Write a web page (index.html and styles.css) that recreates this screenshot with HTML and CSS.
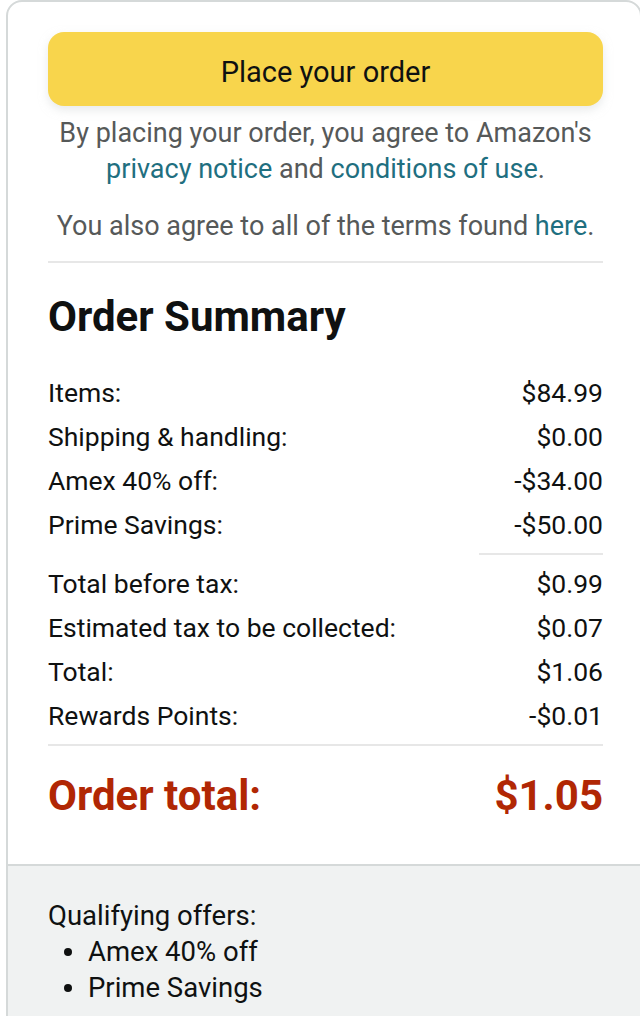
FILE: index.html
```html
<!DOCTYPE html>
<html lang="en">
<head>
<meta charset="utf-8">
<title>Order Summary</title>
<link rel="stylesheet" href="styles.css">
</head>
<body>
<div class="card">
  <div class="main">
    <button class="place-btn" type="button">Place your order</button>
    <p class="legal">By placing your order, you agree to Amazon's <a href="#">privacy notice</a> and <a href="#">conditions of use</a>.</p>
    <p class="legal legal-2">You also agree to all of the terms found <a href="#">here</a>.</p>
    <hr class="divider">
    <h2 class="title">Order Summary</h2>
    <div class="rows">
      <div class="row"><span>Items:</span><span>$84.99</span></div>
      <div class="row"><span>Shipping &amp; handling:</span><span>$0.00</span></div>
      <div class="row"><span>Amex 40% off:</span><span>-$34.00</span></div>
      <div class="row"><span>Prime Savings:</span><span>-$50.00</span></div>
      <hr class="subdivider">
      <div class="row"><span>Total before tax:</span><span>$0.99</span></div>
      <div class="row"><span>Estimated tax to be collected:</span><span>$0.07</span></div>
      <div class="row"><span>Total:</span><span>$1.06</span></div>
      <div class="row"><span>Rewards Points:</span><span>-$0.01</span></div>
    </div>
    <hr class="divider total-divider">
    <div class="order-total"><span>Order total:</span><span>$1.05</span></div>
  </div>
  <div class="footer">
    <div class="offers-title">Qualifying offers:</div>
    <ul class="offers">
      <li>Amex 40% off</li>
      <li>Prime Savings</li>
    </ul>
  </div>
</div>
</body>
</html>
```

FILE: styles.css
```css
html, body {
  margin: 0;
  padding: 0;
  overflow: hidden;
  background: #ffffff;
}

body {
  font-family: Roboto, "Liberation Sans", Arial, sans-serif;
  color: #0F1111;
  font-size: 26px;
}

.card {
  margin-left: 6px;
  width: 636px;
  border: 2px solid #D5D9D9;
  border-radius: 16px 16px 0 0;
  box-sizing: border-box;
  height: 1040px;
  display: flex;
  flex-direction: column;
}

.main {
  padding: 30px 37px 44px 40px;
}

.place-btn {
  display: block;
  width: 100%;
  height: 74px;
  border: none;
  border-radius: 16px;
  background: #F8D54C;
  box-shadow: 0 4px 10px 0 rgba(213, 217, 217, 0.55);
  font-family: Roboto, "Liberation Sans", Arial, sans-serif;
  font-size: 29px;
  color: #0F1111;
  padding: 6px 0 0 0;
  cursor: pointer;
}

.legal {
  margin: 9px 0 0 0;
  text-align: center;
  color: #565959;
  font-size: 27px;
  line-height: 36px;
}

.legal-2 {
  margin-top: 21px;
}

.legal a {
  color: #1F6F80;
  text-decoration: none;
}

.divider {
  border: none;
  border-top: 2px solid #E7E7E7;
  margin: 17px 0 0 0;
  height: 0;
}

.title {
  margin: 30px 0 0 0;
  font-size: 42px;
  line-height: 48px;
  font-weight: 700;
}

.rows {
  margin-top: 30px;
}

.row {
  display: flex;
  justify-content: space-between;
  line-height: 44px;
  font-size: 26.5px;
}

.subdivider {
  border: none;
  border-top: 2px solid #E7E7E7;
  width: 124px;
  margin: 6px 0 7px auto;
  height: 0;
}

.total-divider {
  margin-top: 6px;
}

.order-total {
  margin-top: 26px;
  display: flex;
  justify-content: space-between;
  font-size: 42px;
  line-height: 48px;
  font-weight: 700;
  color: #B12704;
}

.footer {
  flex: 1;
  border-top: 2px solid #D5D9D9;
  background: #F0F2F2;
  padding: 32px 40px 0 40px;
  font-size: 27.5px;
  line-height: 36px;
}

.offers {
  list-style: none;
  margin: 0;
  padding: 0;
}

.offers li {
  display: flex;
  align-items: center;
}

.offers li::before {
  content: "";
  width: 8px;
  height: 8px;
  border-radius: 50%;
  background: #0F1111;
  margin-left: 16px;
  margin-right: 16px;
}
```
